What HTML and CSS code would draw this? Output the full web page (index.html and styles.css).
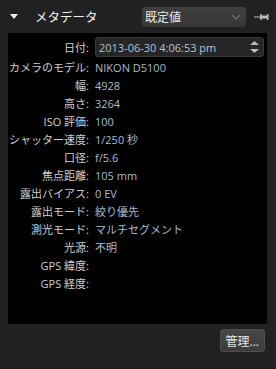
FILE: index.html
```html
<!DOCTYPE html>
<html>

<head>
    <title>メタデータ</title>
    <link rel="stylesheet" href="styles.css">
</head>
<body>
    <div class="header">
        <span class="toggle"></span>
        <span class="title">メタデータ</span>
        <div class="preset">
            <span>既定値</span>
            <svg class="chevron" width="10" height="6" viewBox="0 0 10 6">
                <path d="M1 1 L5 5 L9 1" fill="none" stroke="#6a6a6a" stroke-width="1.4"/>
            </svg>
        </div>
        <svg class="pin" width="16" height="8" viewBox="0 0 16 8">
            <rect x="0" y="3.5" width="6" height="1" fill="#bdbdbd"/>
            <rect x="6" y="1" width="1.5" height="6" fill="#bdbdbd"/>
            <rect x="7" y="2.5" width="6" height="3" fill="#bdbdbd"/>
            <rect x="13" y="1" width="1.5" height="6" fill="#bdbdbd"/>
        </svg>
    </div>

    <div class="panel">
        <div class="row date-row">
            <span class="label">日付:</span>
            <div class="date-input">
                <span>2013-06-30 4:06:53 pm</span>
                <svg class="spin" width="11" height="14" viewBox="0 0 11 14">
                    <path d="M5.5 1 L10 5 L1 5 Z" fill="#bdbdbd"/>
                    <path d="M1 9 L10 9 L5.5 13 Z" fill="#bdbdbd"/>
                </svg>
            </div>
        </div>
        <div class="row"><span class="label">カメラのモデル:</span><span class="value">NIKON D5100</span></div>
        <div class="row"><span class="label">幅:</span><span class="value">4928</span></div>
        <div class="row"><span class="label">高さ:</span><span class="value">3264</span></div>
        <div class="row"><span class="label">ISO 評価:</span><span class="value">100</span></div>
        <div class="row"><span class="label">シャッター速度:</span><span class="value">1/250 秒</span></div>
        <div class="row"><span class="label">口径:</span><span class="value">f/5.6</span></div>
        <div class="row"><span class="label">焦点距離:</span><span class="value">105 mm</span></div>
        <div class="row"><span class="label">露出バイアス:</span><span class="value">0 EV</span></div>
        <div class="row"><span class="label">露出モード:</span><span class="value">絞り優先</span></div>
        <div class="row"><span class="label">測光モード:</span><span class="value">マルチセグメント</span></div>
        <div class="row"><span class="label">光源:</span><span class="value">不明</span></div>
        <div class="row"><span class="label">GPS 緯度:</span><span class="value"></span></div>
        <div class="row"><span class="label">GPS 経度:</span><span class="value"></span></div>
    </div>

    <div class="footer">
        <button type="button" class="manage">管理...</button>
    </div>
</body>
</html>
```

FILE: styles.css
```css
body
{
    margin: 0;
    width: 276px;
    height: 369px;
    background-color: #212121;
    font-family: 'Open Sans', 'Noto Sans CJK JP', sans-serif;
    font-size: 11px;
    color: #d0d0d0;
    overflow: hidden;
}

.header
{
    display: flex;
    align-items: center;
    height: 33px;
}

.toggle
{
    width: 0;
    height: 0;
    margin-left: 10px;
    border-left: 4px solid transparent;
    border-right: 4px solid transparent;
    border-top: 5px solid #f0f0f0;
}

.title
{
    margin-left: 17px;
    font-size: 12.5px;
    color: #f2f2f2;
    flex: 1;
}

.preset
{
    display: flex;
    align-items: center;
    justify-content: space-between;
    box-sizing: border-box;
    width: 104px;
    height: 20px;
    padding: 0 5px 0 3px;
    border-radius: 3px;
    background: linear-gradient(#404040, #363636);
    font-size: 12px;
    color: #e8e8e8;
}

.pin
{
    margin: 0 6px 0 8px;
}

.panel
{
    box-sizing: border-box;
    height: 291px;
    margin: 0 9px 0 8px;
    padding-top: 4px;
    background-color: black;
}

.row
{
    display: grid;
    grid-template-columns: 81px 1fr;
    column-gap: 6px;
    align-items: center;
    height: 18px;
    white-space: nowrap;
}

.date-row
{
    height: 20px;
    margin-bottom: 1px;
}

.label
{
    text-align: right;
    color: #cfcfcf;
}

.value
{
    color: #a9bccf;
}

.date-input
{
    display: flex;
    align-items: center;
    justify-content: space-between;
    box-sizing: border-box;
    height: 20px;
    margin-right: 3px;
    padding: 0 3px 0 3px;
    border: 1px solid #3a3a3a;
    border-radius: 3px;
    background-color: #262626;
    color: #b4c4d4;
}

.footer
{
    display: flex;
    justify-content: flex-end;
    padding: 5px 11px 0 0;
}

.manage
{
    height: 23px;
    padding: 0 5px;
    border: 1px solid #4e4e4e;
    border-radius: 3px;
    background: linear-gradient(#474747, #3c3c3c);
    color: #e6e6e6;
    font-family: 'Open Sans', 'Noto Sans CJK JP', sans-serif;
    font-size: 12px;
}
```
